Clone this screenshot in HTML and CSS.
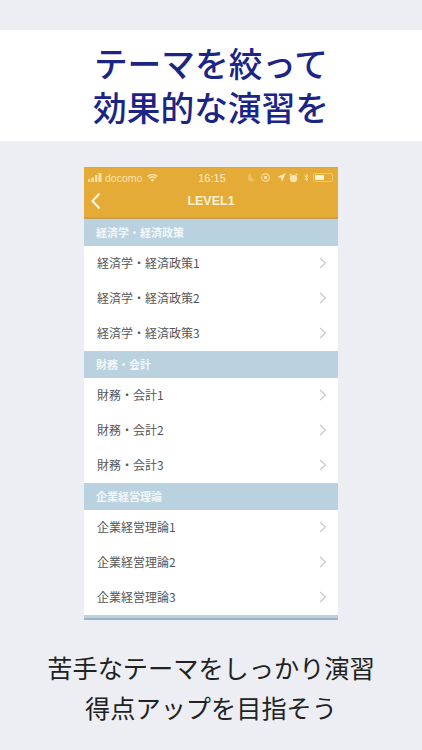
FILE: index.html
```html
<!DOCTYPE html>
<html lang="ja">
<head>
<meta charset="utf-8">
<title>LEVEL1</title>
<link rel="stylesheet" href="styles.css">
</head>
<body>
<header class="banner">
  <h1 class="headline">テーマを絞って<br>効果的な演習を</h1>
</header>
<main class="phone">
  <div class="status">
    <div class="status-left">
      <svg class="signal" width="14" height="9" viewBox="0 0 14 9"><rect x="0" y="6" width="2.400" height="3" rx=".5"/><rect x="3.500" y="4.500" width="2.400" height="4.500" rx=".5"/><rect x="7" y="2" width="2.400" height="7" rx=".5"/><rect x="10.500" y="0" width="3" height="9" rx=".5"/></svg>
      <span>docomo</span>
      <svg class="wifi" width="11" height="8" viewBox="0 0 11 8"><path d="M5.500 8 3.600 5.800a3 3 0 0 1 3.800 0z"/><path d="M2.800 4.900 1.700 3.700a5.900 5.900 0 0 1 7.600 0L8.200 4.900a4.200 4.200 0 0 0-5.400 0z"/><path d="M1 3 0 1.900a8.300 8.300 0 0 1 11 0L10 3a6.800 6.800 0 0 0-9 0z"/></svg>
    </div>
    <div class="status-time">16:15</div>
    <div class="status-right">
      <svg width="7" height="9" viewBox="0 0 7 8" class="moon"><path d="M3 0a4 4 0 1 0 4 6A4.500 4.500 0 0 1 3 0z"/></svg>
      <svg width="9" height="9" viewBox="0 0 8 8"><circle cx="4" cy="4" r="3.400" fill="none" stroke="#fbe3ae" stroke-width=".9"/><circle cx="4" cy="4" r="1.500"/></svg>
      <svg class="loc" width="9" height="9" viewBox="0 0 8 8"><path d="M8 0 0 3.600l3.600.8L4.400 8z"/></svg>
      <svg width="9" height="10" viewBox="0 0 8 9"><circle cx="4" cy="5" r="3.400"/><path d="M.4 2 2 .5M7.600 2 6 .5" stroke="#fbe3ae" fill="none"/></svg>
      <svg class="bt" width="5" height="9" viewBox="0 0 5 8"><path d="M.5 2 4 5.500 2.300 7.500V.5L4 2.500.5 6" fill="none" stroke="#fbe3ae" stroke-width=".8"/></svg>
      <div class="battery"><div class="battery-fill"></div></div>
    </div>
  </div>
  <nav class="navbar">
    <svg class="back" width="12" height="18" viewBox="0 0 12 18"><path d="M9.500 1.500 2.500 9l7 7.500" fill="none" stroke="#fdf3dd" stroke-width="2.200"/></svg>
    <div class="nav-title">LEVEL1</div>
  </nav>

  <div class="section">経済学・経済政策</div>
  <div class="row"><span>経済学・経済政策1</span><svg class="chev" width="8" height="12" viewBox="0 0 8 12"><path d="M1 1l5.500 5L1 11"/></svg></div>
  <div class="row"><span>経済学・経済政策2</span><svg class="chev" width="8" height="12" viewBox="0 0 8 12"><path d="M1 1l5.500 5L1 11"/></svg></div>
  <div class="row"><span>経済学・経済政策3</span><svg class="chev" width="8" height="12" viewBox="0 0 8 12"><path d="M1 1l5.500 5L1 11"/></svg></div>

  <div class="section">財務・会計</div>
  <div class="row"><span>財務・会計1</span><svg class="chev" width="8" height="12" viewBox="0 0 8 12"><path d="M1 1l5.500 5L1 11"/></svg></div>
  <div class="row"><span>財務・会計2</span><svg class="chev" width="8" height="12" viewBox="0 0 8 12"><path d="M1 1l5.500 5L1 11"/></svg></div>
  <div class="row"><span>財務・会計3</span><svg class="chev" width="8" height="12" viewBox="0 0 8 12"><path d="M1 1l5.500 5L1 11"/></svg></div>

  <div class="section">企業経営理論</div>
  <div class="row"><span>企業経営理論1</span><svg class="chev" width="8" height="12" viewBox="0 0 8 12"><path d="M1 1l5.500 5L1 11"/></svg></div>
  <div class="row"><span>企業経営理論2</span><svg class="chev" width="8" height="12" viewBox="0 0 8 12"><path d="M1 1l5.500 5L1 11"/></svg></div>
  <div class="row"><span>企業経営理論3</span><svg class="chev" width="8" height="12" viewBox="0 0 8 12"><path d="M1 1l5.500 5L1 11"/></svg></div>
  <div class="peek"></div>
</main>
<footer class="caption">苦手なテーマをしっかり演習<br>得点アップを目指そう</footer>
</body>
</html>
```
FILE: styles.css
```css
* { box-sizing: border-box; }
html, body { margin: 0; padding: 0; }
body {
  width: 422px;
  height: 750px;
  overflow: hidden;
  background: #eceef3;
  font-family: "Liberation Sans", "Noto Sans CJK JP", sans-serif;
  padding-top: 30px;
}
.banner {
  height: 111px;
  background: #fff;
  display: flex;
  align-items: center;
  justify-content: center;
  padding-bottom: 2px;
}
.headline {
  margin: 0;
  font-size: 33.700px;
  line-height: 44px;
  font-weight: 500;
  color: #1b2586;
  text-align: center;
  font-family: "Noto Sans CJK JP", sans-serif;
}
.phone {
  width: 254px;
  height: 453px;
  margin: 26px 0 0 84px;
  background: #fff;
  display: flex;
  flex-direction: column;
  overflow: hidden;
}
.status {
  height: 20px;
  background: #e4ac37;
  border-top: 1px solid #c9a860;
  display: grid;
  grid-template-columns: 1fr auto 1fr;
  align-items: center;
  padding: 0 5px 0 4px;
  color: #fbe3ae;
  font-size: 10.500px;
}
.status svg { fill: #fbe3ae; display: block; }
.status-left { display: flex; align-items: center; gap: 3px; }
.status-left .wifi { margin-left: 2px; }
.status-time { font-size: 11px; color: #fdeccb; margin-left: 3px; }
.status-right { display: flex; align-items: center; justify-content: flex-end; gap: 3px; }
.status-right .moon { opacity: .4; margin-right: 3px; }
.status-right .loc { margin-left: 4px; }
.status-right .bt { margin: 0 1px 0 3px; }
.battery {
  width: 20px;
  height: 9px;
  border: 1px solid #eec678;
  border-radius: 2px;
  padding: 1px;
}
.battery-fill { width: 9px; height: 100%; background: #fdf3dd; }
.navbar {
  height: 32px;
  background: #e4ac37;
  border-bottom: 2px solid #c79f56;
  display: flex;
  align-items: center;
  justify-content: center;
  position: relative;
  padding-bottom: 2px;
}
.back { position: absolute; left: 6px; top: 5px; }
.nav-title {
  font-size: 12.500px;
  font-weight: 700;
  color: #fdf1d6;
  font-family: "Liberation Sans", sans-serif;
}
.section {
  height: 27px;
  flex: none;
  background: #bad2e0;
  color: #f2f7fa;
  font-size: 11px;
  font-weight: 700;
  display: flex;
  align-items: center;
  padding: 0 0 2px 12px;
  font-family: "Noto Sans CJK JP", sans-serif;
}
.row {
  height: 35px;
  flex: none;
  display: flex;
  align-items: center;
  justify-content: space-between;
  padding: 0 11px 2px 13px;
  color: #555;
  font-size: 12px;
  background: #fff;
  font-family: "Noto Sans CJK JP", sans-serif;
}
.chev { fill: none; stroke: #c8c8cb; stroke-width: 1.200; }
.peek {
  height: 5px;
  flex: none;
  background: #bad2e0;
  border-bottom: 2px solid #9fb4c2;
}
.caption {
  margin-top: 27px;
  text-align: center;
  font-size: 25.200px;
  line-height: 40px;
  color: #222;
  font-family: "Noto Sans CJK JP", sans-serif;
}
```
